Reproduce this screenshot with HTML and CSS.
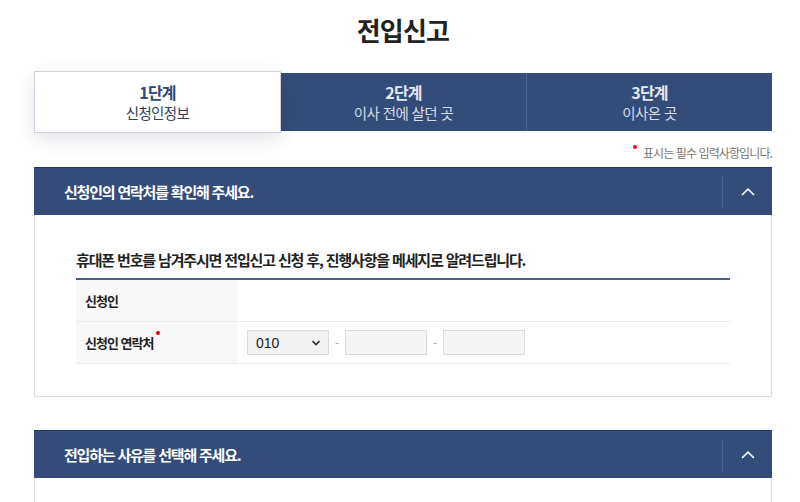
FILE: index.html
```html
<!DOCTYPE html>
<html lang="ko">
<head>
<meta charset="utf-8">
<title>전입신고</title>
<link rel="stylesheet" href="styles.css">
</head>
<body>
<div class="page">
  <h1 class="title">전입신고</h1>

  <ol class="steps">
    <li class="step active">
      <strong class="step-num">1단계</strong>
      <span class="step-name">신청인정보</span>
    </li>
    <li class="step">
      <strong class="step-num">2단계</strong>
      <span class="step-name">이사 전에 살던 곳</span>
    </li>
    <li class="step">
      <strong class="step-num">3단계</strong>
      <span class="step-name">이사온 곳</span>
    </li>
  </ol>

  <p class="req-note"><span class="dot"></span>표시는 필수 입력사항입니다.</p>

  <section class="panel">
    <div class="panel-head">
      <h2 class="panel-title">신청인의 연락처를 확인해 주세요.</h2>
      <button class="toggle" type="button" aria-label="접기">
        <svg width="14" height="8" viewBox="0 0 14 8"><path d="M1 7 L7 1.2 L13 7" fill="none" stroke="#fff" stroke-width="1.6"/></svg>
      </button>
    </div>
    <div class="panel-body">
      <h3 class="info-title">휴대폰 번호를 남겨주시면 전입신고 신청 후, 진행사항을 메세지로 알려드립니다.</h3>
      <div class="form-table">
        <div class="row">
          <div class="label">신청인</div>
          <div class="value"></div>
        </div>
        <div class="row">
          <div class="label">신청인 연락처<span class="req"></span></div>
          <div class="value phone">
            <div class="select">
              <span>010</span>
              <svg width="10" height="6" viewBox="0 0 10 6"><path d="M1.5 1.2 L5 4.6 L8.5 1.2" fill="none" stroke="#333" stroke-width="1.7"/></svg>
            </div>
            <span class="dash">-</span>
            <div class="input"></div>
            <span class="dash">-</span>
            <div class="input"></div>
          </div>
        </div>
      </div>
    </div>
  </section>

  <section class="panel second">
    <div class="panel-head">
      <h2 class="panel-title">전입하는 사유를 선택해 주세요.</h2>
      <button class="toggle" type="button" aria-label="접기">
        <svg width="14" height="8" viewBox="0 0 14 8"><path d="M1 7 L7 1.2 L13 7" fill="none" stroke="#fff" stroke-width="1.6"/></svg>
      </button>
    </div>
    <div class="panel-body empty"></div>
  </section>
</div>
</body>
</html>
```

FILE: styles.css
```css
* { box-sizing: border-box; }

html, body {
  margin: 0;
  padding: 0;
  background: #fff;
  overflow: hidden;
}

body {
  font-family: "Noto Sans CJK KR", "Noto Sans", sans-serif;
  color: #222;
  width: 800px;
  height: 502px;
}

.page {
  width: 738px;
  margin-left: 34px;
}

.title {
  margin: 0;
  padding-top: 12px;
  height: 72px;
  font-size: 26px;
  line-height: 36px;
  font-weight: 700;
  text-align: center;
  color: #222;
  letter-spacing: -0.8px;
}

.steps {
  list-style: none;
  margin: 0;
  padding: 0;
  display: flex;
  height: 58px;
  margin-top: 1px;
}

.step {
  flex: 1 1 0;
  display: flex;
  flex-direction: column;
  align-items: center;
  justify-content: center;
  background: #344c79;
  color: #e3e7ef;
  border-left: 1px solid #4b6190;
}

.step:nth-child(2) { border-left: 0; }

.step-num {
  font-size: 16px;
  line-height: 21px;
  font-weight: 700;
  letter-spacing: -0.8px;
}

.step-name {
  font-size: 14.5px;
  line-height: 20px;
  color: #d6dce8;
  letter-spacing: -0.6px;
}

.step.active {
  background: #fff;
  border: 1px solid #cfd4de;
  margin: -2px 0 -2px;
  box-shadow: 0 6px 18px rgba(40, 50, 80, 0.13);
  position: relative;
  z-index: 1;
}

.step.active .step-num { color: #2e4776; }
.step.active .step-name { color: #334058; }

.req-note {
  margin: 0;
  padding-top: 14px;
  height: 36px;
  text-align: right;
  font-size: 12px;
  line-height: 16px;
  color: #777;
  letter-spacing: -0.9px;
}

.req-note .dot {
  display: inline-block;
  width: 4px;
  height: 4px;
  border-radius: 50%;
  background: #e60012;
  vertical-align: 9px;
  margin-right: 6px;
}

.panel-head {
  display: flex;
  align-items: center;
  height: 48px;
  background: #344c79;
  border-top: 1px solid #24396a;
}

.panel-title {
  flex: 1;
  margin: 0;
  padding-left: 30px;
  font-size: 15px;
  font-weight: 700;
  color: #fff;
  letter-spacing: -1.2px;
}

.toggle {
  width: 50px;
  height: 32px;
  padding: 0;
  border: 0;
  border-left: 1px solid #4d6392;
  background: transparent;
  display: flex;
  align-items: center;
  justify-content: center;
}

.panel-body {
  border: 1px solid #ddd;
  border-top: 0;
  padding: 34px 41px 32px;
}

.info-title {
  margin: 0;
  font-size: 15px;
  line-height: 22px;
  font-weight: 700;
  color: #222;
  letter-spacing: -1.15px;
  padding-bottom: 7px;
  border-bottom: 2px solid #4a5e86;
}

.row {
  display: flex;
  height: 42px;
  border-bottom: 1px solid #ececec;
}

.label {
  width: 162px;
  background: #f8f8f8;
  padding-left: 9px;
  display: flex;
  align-items: center;
  font-size: 13px;
  font-weight: 700;
  color: #222;
  letter-spacing: -1px;
}

.req {
  display: inline-block;
  width: 4px;
  height: 4px;
  border-radius: 50%;
  background: #e60012;
  align-self: flex-start;
  margin-top: 9px;
  margin-left: 3px;
}

.value {
  flex: 1;
  display: flex;
  align-items: center;
  padding-left: 9px;
}

.select {
  width: 82px;
  height: 25px;
  background: #f2f2f2;
  border: 1px solid #dcdcdc;
  display: flex;
  align-items: center;
  justify-content: space-between;
  padding: 0 7px 0 8px;
  font-family: "Liberation Sans", Arial, sans-serif;
  font-size: 14px;
  color: #222;
}

.dash {
  width: 16px;
  text-align: center;
  color: #aaa;
  font-size: 12px;
}

.input {
  width: 82px;
  height: 25px;
  background: #f5f5f5;
  border: 1px solid #dcdcdc;
}

.second {
  margin-top: 33px;
}

.panel-body.empty {
  height: 60px;
  padding: 0;
}
```
